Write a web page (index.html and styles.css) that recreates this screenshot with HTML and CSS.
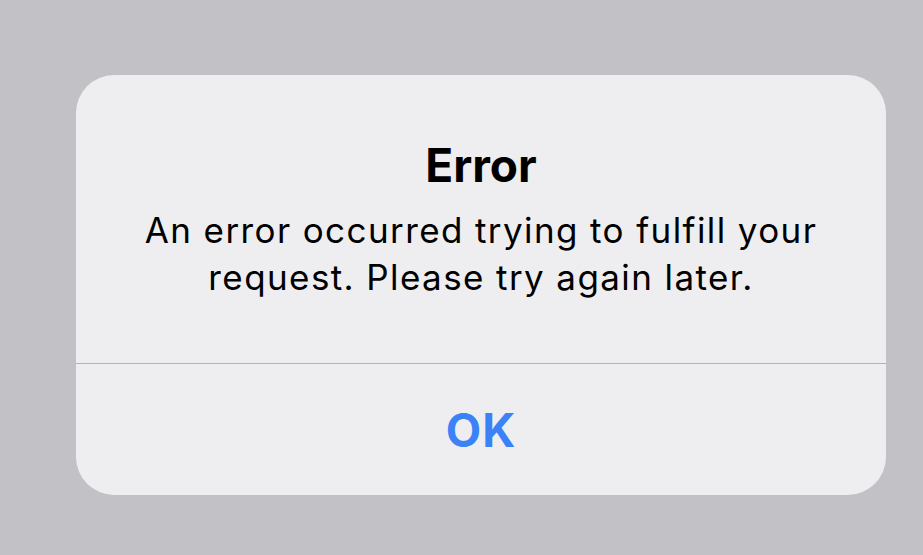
FILE: index.html
```html
<!DOCTYPE html>
<html lang="en">
<head>
  <meta charset="UTF-8" />
  <title>Error</title>
  <link rel="stylesheet" href="styles.css">
</head>
<body>
  <div class="alert">
    <div class="alert-body">
      <h1 class="alert-title">Error</h1>
      <p class="alert-message">An error occurred trying to fulfill your request. Please try again later.</p>
    </div>
    <button class="alert-button">OK</button>
  </div>
</body>
</html>
```
FILE: styles.css
```css
* {
  box-sizing: border-box;
}

body {
  margin: 0;
  height: 555px;
  overflow: hidden;
  background-color: #c2c1c6;
  font-family: Inter, "Liberation Sans", sans-serif;
}

.alert {
  margin: 75px 0 0 76px;
  width: 810px;
  height: 420px;
  border-radius: 38px;
  background-color: #eeeef0;
  display: flex;
  flex-direction: column;
  overflow: hidden;
}

.alert-body {
  height: 289px;
  padding: 67px 40px 0;
  border-bottom: 1px solid #b3b3b6;
  text-align: center;
}

.alert-title {
  margin: 0;
  font-size: 46px;
  font-weight: 700;
  line-height: 1;
  color: #000;
}

.alert-message {
  margin: 19px 0 0;
  font-size: 35px;
  line-height: 47px;
  letter-spacing: 1.4px;
  color: #000;
}

.alert-button {
  flex: 1;
  border: 0;
  background: none;
  padding: 1px 0 0;
  font-family: inherit;
  font-size: 46px;
  font-weight: 700;
  letter-spacing: 1px;
  color: #3a82f6;
}
```
